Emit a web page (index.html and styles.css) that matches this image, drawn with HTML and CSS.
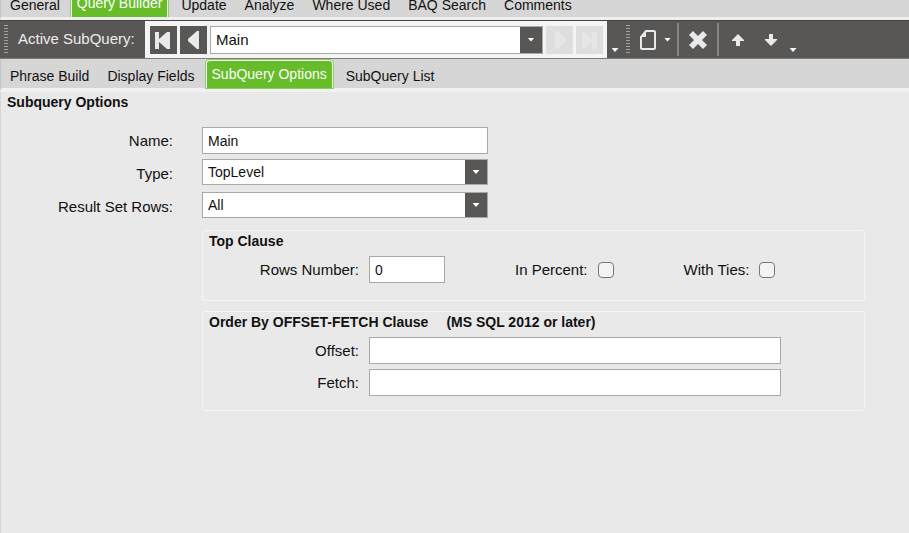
FILE: index.html
```html
<!DOCTYPE html>
<html lang="en">
<head>
    <meta charset="UTF-8">
    <meta name="viewport" content="width=device-width, initial-scale=1.0">
    <title>Query Builder</title>
    <link rel="stylesheet" href="styles.css">
</head>
<body>
    <!-- Main tabs -->
    <nav class="tabs main-tabs">
        <a class="tab" href="#">General</a>
        <a class="tab active" href="#">Query Builder</a>
        <a class="tab" href="#">Update</a>
        <a class="tab" href="#">Analyze</a>
        <a class="tab" href="#">Where Used</a>
        <a class="tab" href="#">BAQ Search</a>
        <a class="tab" href="#">Comments</a>
    </nav>

    <!-- Toolbar -->
    <div class="toolbar">
        <span class="grip"></span>
        <label class="toolbar-label" for="activeSubQuery">Active SubQuery:</label>
        <div class="navigator">
            <button type="button" class="nav-button" aria-label="First">
                <svg width="27" height="28" viewBox="0 0 27 28"><path d="M5 6h4v7l8-7h3v17h-3l-8-7v7H5z"/></svg>
            </button>
            <button type="button" class="nav-button" aria-label="Previous">
                <svg width="27" height="28" viewBox="0 0 27 28"><path d="M17 5h2v18h-2l-9-8v-2z"/></svg>
            </button>
            <div class="combo">
                <select id="activeSubQuery">
                    <option>Main</option>
                </select>
                <span class="combo-arrow"><span class="caret"></span></span>
            </div>
            <button type="button" class="nav-button" aria-label="Next" disabled>
                <svg width="27" height="28" viewBox="0 0 27 28"><path d="M9 5h2l9 8v2l-9 8H9z"/></svg>
            </button>
            <button type="button" class="nav-button" aria-label="Last" disabled>
                <svg width="27" height="28" viewBox="0 0 27 28"><path d="M6 6h2l8 7V6h5v17h-5v-7l-8 7H6z"/></svg>
            </button>
        </div>
        <button type="button" class="overflow-button" aria-label="More"><span class="caret"></span></button>
        <span class="grip"></span>
        <button type="button" class="tool-button new-button" aria-label="New">
            <svg width="18" height="22" viewBox="0 0 18 22"><path class="outline" d="M7 2h8q1 0 1 1v16q0 1-1 1H3q-1 0-1-1V8z"/><path d="M7 1v7H1z"/></svg>
            <span class="caret"></span>
        </button>
        <span class="separator"></span>
        <button type="button" class="tool-button" aria-label="Delete">
            <svg width="18" height="18" viewBox="0 0 18 18"><path d="M4 0l5 5 5-5 4 4-5 5 5 5-4 4-5-5-5 5-4-4 5-5-5-5z"/></svg>
        </button>
        <span class="separator"></span>
        <button type="button" class="tool-button arrow-button" aria-label="Move up">
            <svg width="12" height="12" viewBox="0 0 12 12"><path d="M6 0l6 6v1H8v5H4V7H0V6z"/></svg>
        </button>
        <button type="button" class="tool-button arrow-button" aria-label="Move down">
            <svg width="12" height="12" viewBox="0 0 12 12"><path d="M6 12l6-6V5H8V0H4v5H0v1z"/></svg>
        </button>
        <button type="button" class="overflow-button" aria-label="More"><span class="caret"></span></button>
    </div>

    <!-- Query builder tabs -->
    <nav class="tabs sub-tabs">
        <a class="tab" href="#">Phrase Build</a>
        <a class="tab" href="#">Display Fields</a>
        <a class="tab active" href="#">SubQuery Options</a>
        <a class="tab" href="#">SubQuery List</a>
    </nav>

    <main class="panel">
        <h1>Subquery Options</h1>
        <form class="options-form">
            <label for="name">Name:</label>
            <input type="text" id="name" class="text-box" value="Main">

            <label for="type">Type:</label>
            <div class="combo">
                <select id="type">
                    <option>TopLevel</option>
                </select>
                <span class="combo-arrow"><span class="caret"></span></span>
            </div>

            <label for="resultSetRows">Result Set Rows:</label>
            <div class="combo">
                <select id="resultSetRows">
                    <option>All</option>
                </select>
                <span class="combo-arrow"><span class="caret"></span></span>
            </div>

            <!-- Top clause -->
            <section class="group">
                <h2>Top Clause</h2>
                <div class="group-row">
                    <label class="group-label" for="rowsNumber">Rows Number:</label>
                    <input type="text" id="rowsNumber" class="text-box short" value="0">
                    <label class="check">In Percent: <input type="checkbox"></label>
                    <label class="check">With Ties: <input type="checkbox"></label>
                </div>
            </section>

            <!-- Offset-fetch clause -->
            <section class="group offset-group">
                <h2><span>Order By OFFSET-FETCH Clause</span> <span>(MS SQL 2012 or later)</span></h2>
                <div class="group-row">
                    <label class="group-label" for="offset">Offset:</label>
                    <input type="text" id="offset" class="text-box long">
                </div>
                <div class="group-row">
                    <label class="group-label" for="fetch">Fetch:</label>
                    <input type="text" id="fetch" class="text-box long">
                </div>
            </section>
        </form>
    </main>
</body>
</html>
```
FILE: styles.css
```css
* {
    box-sizing: border-box;
}

body {
    display: flex;
    flex-direction: column;
    min-height: 100vh;
    margin: 0;
    background-color: #e9e9e9;
    color: #111;
    font-family: "Liberation Sans", Arial, sans-serif;
    font-size: 15px;
}

button, input, select {
    font-family: inherit;
    color: inherit;
    margin: 0;
}

button {
    padding: 0;
    border: none;
    background: none;
}

svg {
    display: block;
    fill: #e9e9e9;
}

/* Tabs */
.tabs {
    display: flex;
    align-items: flex-end;
    background-color: #d6d6d6;
    border-left: 1px solid #c4c4c4;
}

.main-tabs {
    height: 20px;
    overflow: hidden;
    border-bottom: 3px solid #efefef;
}

.sub-tabs {
    height: 33px;
    padding-top: 1px;
    border-bottom: 4px solid #f1f1f1;
}

.tab {
    flex: none;
    height: 28px;
    padding: 0 9px;
    font-size: 14px;
    line-height: 32px;
    color: #111;
    text-decoration: none;
    white-space: nowrap;
}

.tab.active {
    margin: 0 4px 0 2px;
    padding: 0 5px;
    line-height: 26px;
    color: #fff;
    background-color: #66bc29;
    border: 1px solid #f4f4f4;
    border-bottom: none;
    border-radius: 4px 4px 0 0;
    box-shadow: 0 0 0 1px #8fcb66;
}

/* Toolbar */
.toolbar {
    display: flex;
    align-items: center;
    height: 39px;
    padding-left: 4px;
    background-color: #595755;
    border-top: 1px solid #454442;
    border-bottom: 1px solid #7d7c7a;
}

.grip {
    width: 4px;
    height: 29px;
    background: repeating-linear-gradient(#a3a2a1 0, #a3a2a1 1px, #595755 1px, #595755 3px);
}

.toolbar-label {
    width: 137px;
    padding: 0 0 3px 10px;
    color: #ececec;
}

.navigator {
    display: flex;
    align-items: center;
    gap: 3px;
    height: 37px;
    padding: 0 4px 0 5px;
    background-color: #f4f4f4;
}

.navigator .combo {
    width: 333px;
    height: 28px;
}

.navigator select {
    font-size: 15px;
}

.nav-button {
    width: 27px;
    height: 28px;
    background-color: #595755;
}

.nav-button:disabled {
    background-color: #dedede;
}

.nav-button:disabled svg {
    fill: #e6e6e6;
}

.caret {
    width: 7px;
    height: 4px;
    background-color: #fff;
    clip-path: polygon(0 0, 100% 0, 50% 100%);
}

.overflow-button {
    display: flex;
    align-items: flex-end;
    justify-content: center;
    width: 19px;
    height: 37px;
    padding: 0 3px 6px 0;
}

.tool-button {
    display: flex;
    align-items: center;
    justify-content: center;
    gap: 7px;
    width: 38px;
    height: 37px;
}

.new-button {
    width: 47px;
    padding-left: 3px;
}

.arrow-button {
    width: 33px;
    padding-left: 4px;
}

.outline {
    fill: none;
    stroke: #e9e9e9;
    stroke-width: 2;
}

.separator {
    width: 2px;
    height: 33px;
    background-color: #858482;
}

/* Combo box */
.combo {
    display: flex;
    position: relative;
    height: 26px;
    background-color: #fff;
    border: 1px solid #a8a8a8;
}

.combo select {
    flex: 1;
    width: 100%;
    padding: 0 26px 0 5px;
    border: none;
    background: none;
    font-size: 14px;
    appearance: none;
}

.navigator .combo select {
    font-size: 15px;
}

.combo-arrow {
    position: absolute;
    top: 0;
    right: 0;
    bottom: 0;
    display: flex;
    align-items: center;
    justify-content: center;
    width: 22px;
    background-color: #595755;
    pointer-events: none;
}

.text-box {
    width: 100%;
    height: 27px;
    padding: 1px 5px 0 5px;
    background-color: #fff;
    border: 1px solid #a8a8a8;
    font-size: 14px;
}

/* Options */
.panel {
    flex: 1;
    border-left: 1px solid #d6d6d6;
}

h1, h2 {
    margin: 0;
    font-size: 14px;
    line-height: 20px;
}

h1 {
    padding-left: 6px;
}

.options-form {
    display: grid;
    grid-template-columns: 172px 286px 1fr;
    column-gap: 29px;
    row-gap: 5px;
    align-items: center;
    padding: 15px 44px 0 0;
}

.options-form > label {
    grid-column: 1;
    text-align: right;
}

.options-form > .combo {
    margin-bottom: 2px;
}

.group {
    grid-column: 2 / -1;
    height: 71px;
    margin-top: 5px;
    padding-left: 6px;
    border: 1px solid #f6f6f6;
    border-radius: 3px;
}

.group-row {
    display: flex;
    align-items: center;
    margin-top: 5px;
}

.group-label {
    width: 150px;
    margin-right: 10px;
    text-align: right;
}

.short {
    width: 76px;
}

.long {
    width: 412px;
}

.check {
    display: flex;
    align-items: center;
    gap: 10px;
    margin-left: 70px;
}

.check input {
    width: 16px;
    height: 16px;
    background-color: #f3f3f3;
    border: 1px solid #777;
    border-radius: 4px;
    appearance: none;
}

.check input:checked {
    background-color: #66bc29;
}

.offset-group {
    height: 100px;
}

.offset-group h2 {
    display: flex;
    gap: 18px;
}
```
